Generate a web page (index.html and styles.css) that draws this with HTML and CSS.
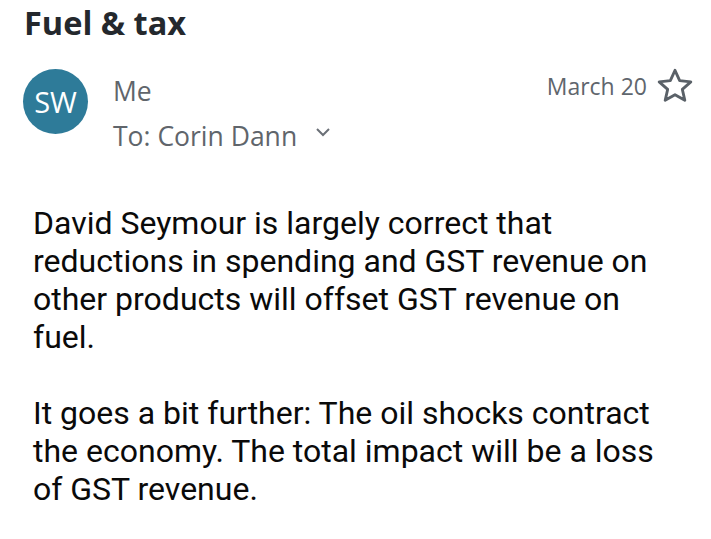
FILE: index.html
```html
<!DOCTYPE html>
<html>
<head>
<meta charset="utf-8">
<link rel="stylesheet" href="styles.css">
</head>
<body>
<div class="page">
  <h1 class="subject">Fuel &amp; tax</h1>
  <div class="header">
    <div class="avatar">SW</div>
    <div class="meta">
      <div class="from">Me</div>
      <div class="to">To: Corin Dann
        <svg class="chev" width="16" height="10" viewBox="0 0 16 10"><path d="M2 2 L8 8 L14 2" fill="none" stroke="#6b7077" stroke-width="2"/></svg>
      </div>
    </div>
    <div class="date">March 20</div>
    <svg class="star" width="40" height="40" viewBox="0 0 24 24"><path d="M12 2.6 L14.8 8.8 L21.5 9.5 L16.4 14 L17.9 20.6 L12 17.2 L6.1 20.6 L7.6 14 L2.5 9.5 L9.2 8.8 Z" fill="none" stroke="#5a6168" stroke-width="1.7" stroke-linejoin="round"/></svg>
  </div>
  <div class="body">
    <p>David Seymour is largely correct that reductions in spending and GST revenue on other products will offset GST revenue on fuel.</p>
    <p>It goes a bit further: The oil shocks contract the economy. The total impact will be a loss of GST revenue.</p>
  </div>
</div>
</body>
</html>
```
FILE: styles.css
```css
html, body { margin: 0; padding: 0; background: #fff; }
.page { width: 711px; height: 539px; overflow: hidden; }
.subject {
  margin: 0;
  padding: 3px 0 0 24px;
  font-family: "Open Sans", sans-serif;
  font-weight: 700;
  font-size: 32.5px;
  line-height: 40px;
  color: #24282d;
}
.header {
  display: flex;
  align-items: flex-start;
  padding: 26px 16px 0 23px;
}
.avatar {
  width: 65px; height: 65px; border-radius: 50%;
  background: #2e7b99; color: #fff;
  display: flex; align-items: center; justify-content: center;
  font-family: "Open Sans", sans-serif; font-size: 29px;
  flex: none;
  margin-top: 0;
}
.meta { margin-left: 25px; flex: 1; font-family: "Open Sans", sans-serif; color: #60656b; }
.from { font-size: 26.5px; line-height: 34px; margin-top: 5px; }
.to { font-size: 26.5px; line-height: 34px; margin-top: 11px; display: flex; align-items: center; }
.chev { margin-left: 18px; margin-top: -8px; }
.date { font-family: "Open Sans", sans-serif; font-size: 23px; color: #5f666d; line-height: 30px; margin-top: 2px; }
.star { margin-left: 8px; margin-top: -3px; }
.body {
  padding: 0 40px 0 33px;
  margin-top: 51px;
  font-family: Roboto, sans-serif;
  font-size: 32px;
  line-height: 38px;
  color: #0a0a0a;
}
.body p { margin: 0 0 38px; }
```
